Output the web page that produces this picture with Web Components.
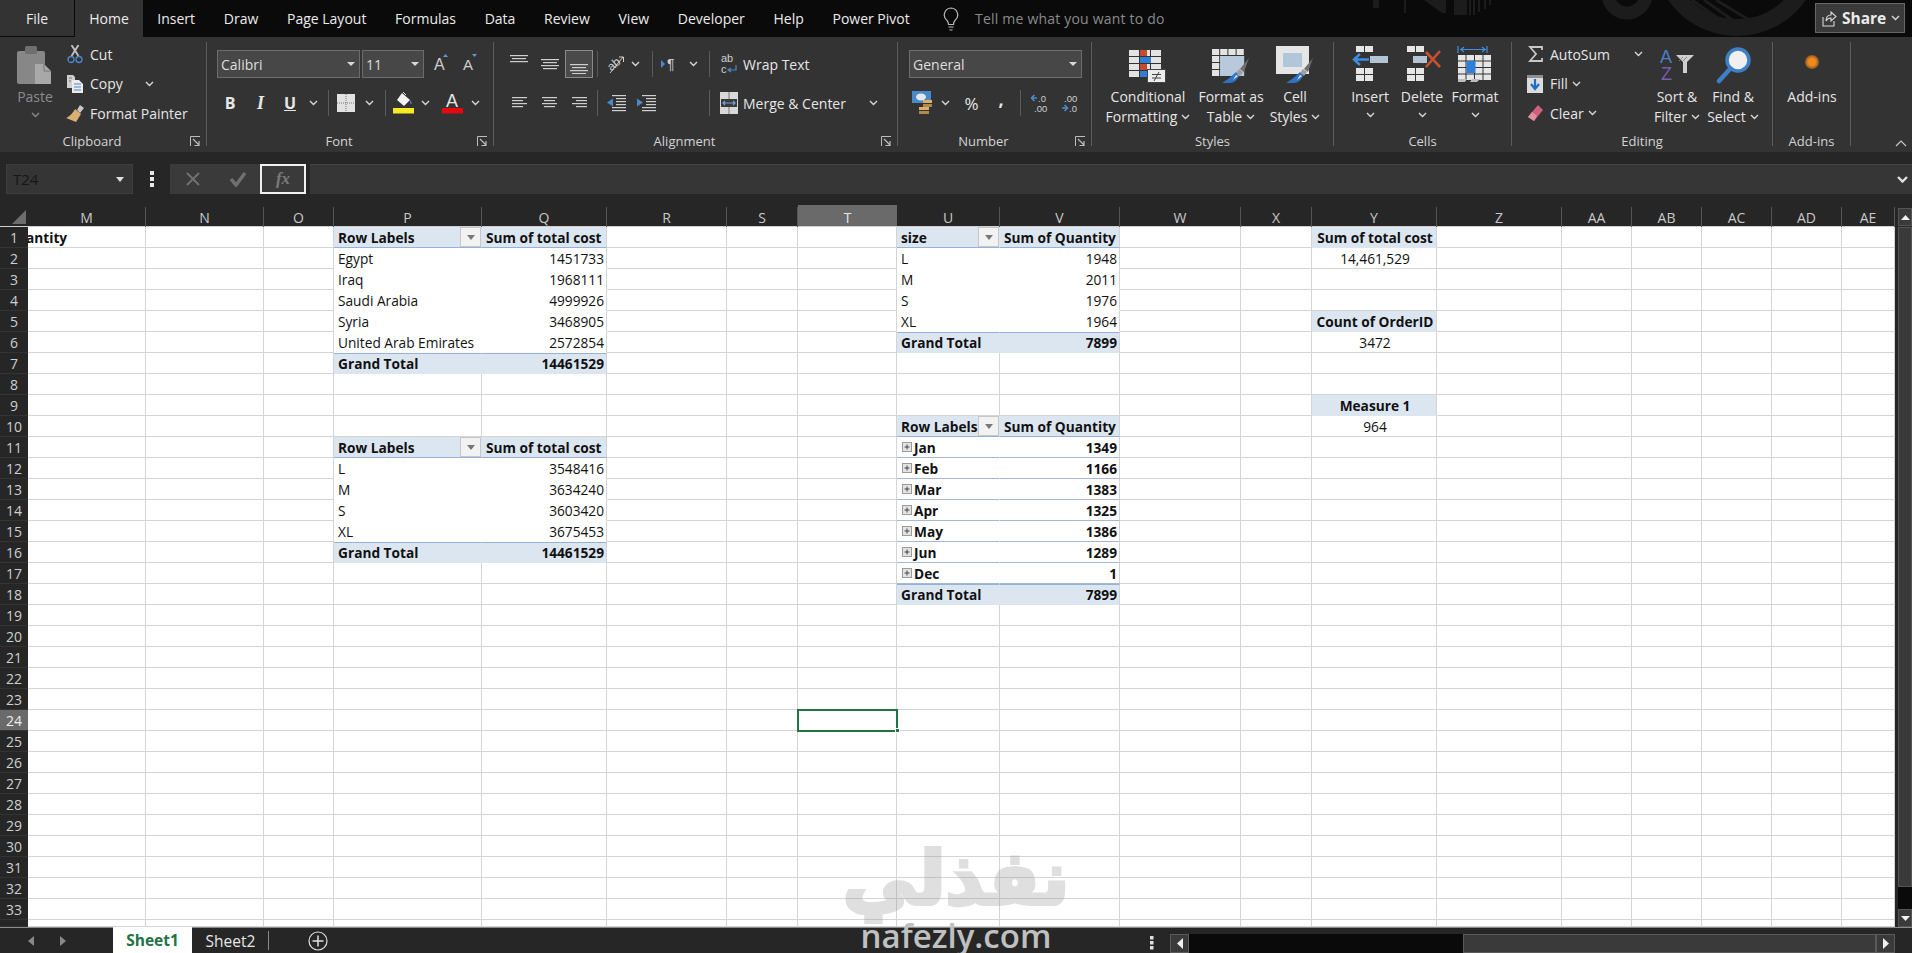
<!DOCTYPE html>
<html>
<head>
<meta charset="utf-8">
<title>Excel</title>
<style>
  html, body { margin: 0; background: #262626; }
  body { font: 14px "Open Sans", sans-serif; color: #e0e0e0; overflow: hidden; }
</style>
</head>
<body>
<xl-app>
  <xl-titlebar></xl-titlebar>
  <xl-ribbon>
    <xl-group w="207" label="Clipboard" launcher>
      <xl-row h="89" top>
        <xl-tool w="4"></xl-tool>
        <xl-big w="62" icon="paste" l1="Paste" chev dim></xl-big>
        <xl-stack>
          <xl-row h="24"><xl-tool w="18"><xl-icon name="cut"></xl-icon></xl-tool><xl-tool w="6"></xl-tool><span>Cut</span></xl-row>
          <xl-row h="24"><xl-tool w="18"><xl-icon name="copy"></xl-icon></xl-tool><xl-tool w="6"></xl-tool><span>Copy</span><xl-tool w="22"></xl-tool><xl-icon name="chev"></xl-icon></xl-row>
          <xl-row h="24"><xl-tool w="18"><xl-icon name="brush"></xl-icon></xl-tool><xl-tool w="6"></xl-tool><span>Format Painter</span></xl-row>
        </xl-stack>
      </xl-row>
    </xl-group>

    <xl-group w="287" label="Font" launcher>
      <xl-rows>
        <xl-row h="28">
          <xl-tool w="10"></xl-tool>
          <xl-combo w="143">Calibri</xl-combo>
          <xl-tool w="2"></xl-tool>
          <xl-combo w="62">11</xl-combo>
          <xl-tool w="34"><xl-icon name="grow"></xl-icon></xl-tool>
          <xl-tool w="24"><xl-icon name="shrink"></xl-icon></xl-tool>
        </xl-row>
        <xl-row h="28">
          <xl-tool w="8"></xl-tool>
          <xl-tool w="30"><b style="font-size:16px">B</b></xl-tool>
          <xl-tool w="31"><i style="font-family:'Liberation Serif',serif;font-size:18px;font-weight:700">I</i></xl-tool>
          <xl-tool w="28"><b style="font-size:16px;text-decoration:underline">U</b></xl-tool>
          <xl-tool w="18"><xl-icon name="chev"></xl-icon></xl-tool>
          <xl-tool w="6"></xl-tool><xl-sep></xl-sep>
          <xl-tool w="34"><xl-icon name="borders"></xl-icon></xl-tool>
          <xl-tool w="12"><xl-icon name="chev"></xl-icon></xl-tool>
          <xl-tool w="10"></xl-tool><xl-sep></xl-sep>
          <xl-tool w="34"><xl-icon name="fill"></xl-icon></xl-tool>
          <xl-tool w="10"><xl-icon name="chev"></xl-icon></xl-tool>
          <xl-tool w="4"></xl-tool>
          <xl-tool w="36"><xl-icon name="fontcolor"></xl-icon></xl-tool>
          <xl-tool w="10"><xl-icon name="chev"></xl-icon></xl-tool>
        </xl-row>
      </xl-rows>
    </xl-group>

    <xl-group w="404" label="Alignment" launcher>
      <xl-rows>
        <xl-row h="28">
          <xl-tool w="10"></xl-tool>
          <xl-tool w="30"><xl-icon name="atop"></xl-icon></xl-tool>
          <xl-tool w="31"><xl-icon name="amid"></xl-icon></xl-tool>
          <xl-tool w="28" on><xl-icon name="abot"></xl-icon></xl-tool>
          <xl-tool w="4"></xl-tool><xl-sep></xl-sep>
          <xl-tool w="33"><xl-icon name="orient"></xl-icon></xl-tool>
          <xl-tool w="8"><xl-icon name="chev"></xl-icon></xl-tool>
          <xl-tool w="13"></xl-tool><xl-sep></xl-sep>
          <xl-tool w="34"><xl-icon name="para"></xl-icon></xl-tool>
          <xl-tool w="12"><xl-icon name="chev"></xl-icon></xl-tool>
          <xl-tool w="10"></xl-tool><xl-sep></xl-sep>
          <xl-tool w="11"></xl-tool>
          <xl-tool w="16"><xl-icon name="wrap"></xl-icon></xl-tool>
          <xl-tool w="6"></xl-tool><span>Wrap Text</span>
        </xl-row>
        <xl-row h="28">
          <xl-tool w="10"></xl-tool>
          <xl-tool w="30"><xl-icon name="aleft"></xl-icon></xl-tool>
          <xl-tool w="30"><xl-icon name="acen"></xl-icon></xl-tool>
          <xl-tool w="30"><xl-icon name="aright"></xl-icon></xl-tool>
          <xl-tool w="3"></xl-tool><xl-sep></xl-sep>
          <xl-tool w="36"><xl-icon name="indentl"></xl-icon></xl-tool>
          <xl-tool w="24"><xl-icon name="indentr"></xl-icon></xl-tool>
          <xl-tool w="51"></xl-tool><xl-sep></xl-sep>
          <xl-tool w="10"></xl-tool>
          <xl-tool w="18"><xl-icon name="merge"></xl-icon></xl-tool>
          <xl-tool w="5"></xl-tool>
          <xl-tool w="118" left>Merge &amp; Center</xl-tool>
          <xl-tool w="24"><xl-icon name="chev"></xl-icon></xl-tool>
        </xl-row>
      </xl-rows>
    </xl-group>

    <xl-group w="194" label="Number" launcher>
      <xl-rows>
        <xl-row h="28"><xl-tool w="11"></xl-tool><xl-combo w="173">General</xl-combo></xl-row>
        <xl-row h="28">
          <xl-tool w="14"></xl-tool>
          <xl-tool w="20"><xl-icon name="money"></xl-icon></xl-tool>
          <xl-tool w="26"><xl-icon name="chev"></xl-icon></xl-tool>
          <xl-tool w="27"><span style="font-size:17px">%</span></xl-tool>
          <xl-tool w="32"><b style="font-size:18px;line-height:18px;margin-bottom:8px">,</b></xl-tool>
          <xl-tool w="3"></xl-tool><xl-sep></xl-sep>
          <xl-tool w="37"><xl-icon name="decl"></xl-icon></xl-tool>
          <xl-tool w="24"><xl-icon name="decr"></xl-icon></xl-tool>
        </xl-row>
      </xl-rows>
    </xl-group>

    <xl-group w="242" label="Styles">
      <xl-row h="89" top>
        <xl-big w="112" icon="cf" l1="Conditional" l2="Formatting" chev></xl-big>
        <xl-big w="54" icon="ft" l1="Format as" l2="Table" chev></xl-big>
        <xl-big w="74" icon="cs" l1="Cell" l2="Styles" chev></xl-big>
      </xl-row>
    </xl-group>

    <xl-group w="178" label="Cells">
      <xl-row h="89" top>
        <xl-big w="72" icon="ins" l1="Insert" chev></xl-big>
        <xl-big w="32" icon="del" l1="Delete" chev></xl-big>
        <xl-big w="74" icon="fmt" l1="Format" chev></xl-big>
      </xl-row>
    </xl-group>

    <xl-group w="261" label="Editing">
      <xl-row h="89" top>
        <xl-tool w="4"></xl-tool>
        <xl-stack style="width:131px">
          <xl-row h="24"><xl-tool w="11"></xl-tool><xl-tool w="16"><xl-icon name="sum"></xl-icon></xl-tool><xl-tool w="7"></xl-tool><xl-tool w="84" left>AutoSum</xl-tool><xl-icon name="chev"></xl-icon></xl-row>
          <xl-row h="24"><xl-tool w="11"></xl-tool><xl-tool w="16"><xl-icon name="filldown"></xl-icon></xl-tool><xl-tool w="7"></xl-tool><span>Fill</span><xl-tool w="4"></xl-tool><xl-icon name="chev"></xl-icon></xl-row>
          <xl-row h="24"><xl-tool w="11"></xl-tool><xl-tool w="16"><xl-icon name="clear"></xl-icon></xl-tool><xl-tool w="7"></xl-tool><span>Clear</span><xl-tool w="4"></xl-tool><xl-icon name="chev"></xl-icon></xl-row>
        </xl-stack>
        <xl-big w="60" icon="sort" l1="Sort &amp;" l2="Filter" chev></xl-big>
        <xl-big w="52" icon="find" l1="Find &amp;" l2="Select" chev></xl-big>
      </xl-row>
    </xl-group>

    <xl-group w="78" label="Add-ins">
      <xl-row h="89" top><xl-big w="78" icon="addin" l1="Add-ins"></xl-big></xl-row>
    </xl-group>

    <xl-collapse></xl-collapse>
  </xl-ribbon>
  <xl-formula></xl-formula>
  <xl-sheet></xl-sheet>
  <xl-tabs></xl-tabs>
  <xl-watermark></xl-watermark>
</xl-app>

<script>
  const svg = (w, h, body) => `<svg width="${w}" height="${h}" viewBox="0 0 ${w} ${h}" xmlns="http://www.w3.org/2000/svg">${body}</svg>`;
  const bars = list => list.map(([x, y, l]) => `<rect x="${x}" y="${y}" width="${l}" height="1.2" fill="#cfcfcf"/>`).join('');
  // table of small cells used by the big ribbon icons
  const cells = (x, y, cols, rows, cw, ch, fill) => {
    let out = '';
    for (let r = 0; r < rows; r++) {
      for (let c = 0; c < cols; c++) {
        out += `<rect x="${x + c * cw}" y="${y + r * ch}" width="${cw - 1}" height="${ch - 1}" fill="${fill}"/>`;
      }
    }
    return out;
  };
  const paintbrush = '<path d="M37 12l-5 14-4-3z" fill="#6e6e6e"/><path d="M31 26l-3 4-4-3 3-4z" fill="#a0a0a0"/><path d="M27 30c-2 4-5 7-9 7H10c5-3 10-7 14-11z" fill="#2f73c4"/><path d="M24 29l2 1-5 4z" fill="#dfe8f2"/>';
  const letter = 'font-family="Liberation Sans"';

  const ICONS = {
    chev: svg(9, 6, '<path d="M1 1l3.5 3.5L8 1" fill="none" stroke="#d8d8d8" stroke-width="1.4"/>'),
    dimchev: svg(9, 6, '<path d="M1 1l3.5 3.5L8 1" fill="none" stroke="#8a8a8a" stroke-width="1.4"/>'),
    launcher: svg(11, 11, '<path d="M.5 10V.5H10" fill="none" stroke="#bdbdbd"/><path d="M3 3l6 6M9 5v4.5H4.5" fill="none" stroke="#bdbdbd" stroke-width="1.2"/>'),
    paste: svg(36, 38, '<rect x="0" y="5" width="28" height="33" rx="2" fill="#878787"/><rect x="8" y="0" width="12" height="8" rx="1.5" fill="#6f6f6f"/><path d="M18 18h9l7 7v13H18z" fill="#a8a8a8"/><path d="M27 18v7h7" fill="none" stroke="#777"/>'),
    cut: svg(16, 19, '<path d="M4.500 0l7 11M11.500 0l-7 11" stroke="#c4c4c4" stroke-width="1.800"/><circle cx="4" cy="14.500" r="3" fill="none" stroke="#4a8ac8" stroke-width="1.300"/><circle cx="12" cy="14.500" r="3" fill="none" stroke="#4a8ac8" stroke-width="1.300"/>'),
    copy: svg(16, 18, '<path d="M0 0h6l2 2v11H0z" fill="#d0d0d0"/><path d="M5 5h7l4 4v9H5z" fill="#ececec"/><path d="M7 9h7M7 12h7M7 15h7" stroke="#4a8ac8"/><path d="M2 3h3M2 6h2" stroke="#777"/>'),
    brush: svg(18, 17, '<path d="M14 0l4 3-4 5-3-3z" fill="#c8c8c8"/><path d="M9 4l6 5-5 8-10-4c3-1 7-5 9-9z" fill="#d9b070"/>'),
    grow: svg(17, 22, `<text x="1" y="17" ${letter} font-size="16" fill="#cfcfcf">A</text><path d="M10 4l2.500-3 2.500 3z" fill="#5b9bd5"/>`),
    shrink: svg(17, 22, `<text x="1" y="17" ${letter} font-size="15" fill="#cfcfcf">A</text><path d="M10 1l2.500 3L15 1z" fill="#5b9bd5"/>`),
    borders: svg(18, 18, '<rect width="18" height="18" fill="#e2e2e2"/><path d="M9 0v18M0 9h18" stroke="#777" stroke-dasharray="1 1"/>'),
    fill: svg(21, 26, '<path d="M9 3l8 7-6 6-7-6z" fill="#f2f2f2"/><path d="M10 2l3 3" stroke="#ddd"/><path d="M17 10c2 2 2 4 1 4s-1-2-1-4z" fill="#4a8ac8"/><rect y="18" width="21" height="5.500" fill="#f6e926"/>'),
    fontcolor: svg(21, 26, `<text x="4" y="17" ${letter} font-size="18" fill="#e6e6e6">A</text><rect y="18" width="21" height="5.500" fill="#e3090f"/>`),
    atop: svg(18, 20, bars([[0, 1, 18], [2, 4, 14], [0, 7, 18]])),
    amid: svg(18, 20, bars([[0, 5, 18], [2, 8, 14], [0, 11, 18], [2, 14, 14]])),
    abot: svg(18, 20, bars([[0, 10, 18], [2, 13, 14], [0, 16, 18], [2, 19, 14]])),
    aleft: svg(15, 20, bars([[0, 4, 15], [0, 7, 11], [0, 10, 15], [0, 13, 11]])),
    acen: svg(15, 20, bars([[0, 4, 15], [2, 7, 11], [0, 10, 15], [2, 13, 11]])),
    aright: svg(15, 20, bars([[0, 4, 15], [4, 7, 11], [0, 10, 15], [4, 13, 11]])),
    orient: svg(26, 28, `<text x="5" y="18" ${letter} font-size="12" fill="#cfcfcf" transform="rotate(-40 12 14)">ab</text><path d="M8 23L21 7" stroke="#cfcfcf"/><path d="M17 7h4.500v5" fill="none" stroke="#cfcfcf"/>`),
    para: svg(18, 20, `<path d="M0 6l4 4-4 4z" fill="#4a8ac8"/><text x="6" y="15" ${letter} font-size="14" fill="#cfcfcf">¶</text>`),
    wrap: svg(16, 28, `<text x="0" y="12" ${letter} font-size="11" fill="#cfcfcf">ab</text><text x="0" y="23" ${letter} font-size="11" fill="#cfcfcf">c</text><path d="M15 15v5H8M10 18l-3 2 3 2" fill="none" stroke="#4a8ac8" stroke-width="1.2"/>`),
    indentl: svg(19, 20, bars([[5, 2, 14], [9, 5, 10], [9, 8, 10], [9, 11, 10], [5, 14, 14], [5, 17, 14]]) + '<path d="M0 9.5l6-4v8z" fill="#4a8ac8"/>'),
    indentr: svg(19, 20, bars([[5, 2, 14], [9, 5, 10], [9, 8, 10], [9, 11, 10], [5, 14, 14], [5, 17, 14]]) + '<path d="M6 9.5l-6-4v8z" fill="#4a8ac8"/>'),
    merge: svg(18, 22, '<rect width="18" height="22" fill="#d8d8d8"/><rect x="1" y="7" width="16" height="8" fill="#3a3a3a"/><path d="M9 0v7M9 15v7" stroke="#777"/><path d="M3 11h12M5 9l-2 2 2 2M13 9l2 2-2 2" fill="none" stroke="#6aa5e0" stroke-width="1.2"/>'),
    money: svg(20, 24, '<rect width="19" height="12" fill="#4a8ac8"/><ellipse cx="9" cy="6" rx="5" ry="3.5" fill="#e8e8e8"/><rect x="11" y="9" width="9" height="3" fill="#d9b070"/><rect x="11" y="13" width="9" height="3" fill="#b08a4a"/><rect x="7" y="16" width="10" height="3" fill="#d9b070"/><rect x="7" y="20" width="10" height="3" fill="#b08a4a"/>'),
    decl: svg(18, 24, `<path d="M6 7H1M3.500 4L.5 7l3 3" fill="none" stroke="#4a8ac8" stroke-width="1.600"/><text x="7" y="11" ${letter} font-size="9.500" fill="#cfcfcf">.0</text><text x="3" y="21" ${letter} font-size="9.500" fill="#cfcfcf">.00</text>`),
    decr: svg(18, 24, `<text x="3" y="11" ${letter} font-size="9.500" fill="#cfcfcf">.00</text><path d="M1 17h5M3.500 14l3 3-3 3" fill="none" stroke="#4a8ac8" stroke-width="1.600"/><text x="8" y="21" ${letter} font-size="9.500" fill="#cfcfcf">.0</text>`),
    cf: svg(38, 38, '<g transform="translate(0 4)">' + cells(0, 0, 3, 4, 11, 7, '#e3e3e3') + '<rect x="11" y="0" width="7" height="6" fill="#c8492c"/><rect x="11" y="7" width="11" height="6" fill="#2f7ed8"/><rect x="11" y="14" width="7" height="6" fill="#c8492c"/><rect x="11" y="21" width="7" height="6" fill="#2f7ed8"/><rect x="18.500" y="19.500" width="18" height="13" fill="#ececec" stroke="#444"/><path d="M23 24.500h9M23 28h9M30 22l-5 9" stroke="#444"/></g>'),
    ft: svg(38, 38, '<g transform="translate(0 3)">' + cells(0, 0, 4, 4, 8.200, 7, '#e3e3e3') + '<rect x="8.200" y="7" width="24" height="20" fill="#b7c9da"/></g>' + paintbrush),
    cs: svg(38, 38, '<rect width="33" height="28" fill="#e6e6e6"/><rect x="7" y="7" width="19" height="14" fill="#b2c6da"/>' + paintbrush),
    ins: svg(36, 36, cells(4, 0, 2, 1, 9, 7, '#e6e6e6') + '<path d="M17 13.500H3M8 8l-6 5.500 6 5.500" fill="none" stroke="#3f8fe0" stroke-width="2.400"/><rect x="18" y="10" width="18" height="7" fill="#b4c4d4"/>' + cells(4, 22, 2, 2, 9, 7, '#e6e6e6')),
    del: svg(38, 36, '<g transform="translate(4 0)">' + cells(0, 0, 2, 1, 9, 7, '#e6e6e6') + '<rect x="6" y="10" width="14" height="7" fill="#b4c4d4"/><path d="M20 13.500l-4-3v7z" fill="#b4c4d4"/>' + cells(0, 22, 2, 2, 9, 7, '#e6e6e6') + '<path d="M19 6l14 15M33 5L19 21" stroke="#c8502e" stroke-width="2.600"/></g>'),
    fmt: svg(36, 38, '<path d="M1 0v7M30 0v7M3 3.500h26M7 1l-3 2.500L7 6M25 1l3 2.500L25 6" fill="none" stroke="#3f8fe0" stroke-width="1.200"/>' + cells(1, 9, 4, 4, 8.500, 6.500, '#e6e6e6') + '<rect x="9.500" y="15" width="9" height="12" fill="#2f7ed8"/><path d="M1 36v-3h9l-2 3zM13 36l2-3h8l-3 3z" fill="#bcbcbc"/>'),
    sum: svg(15, 16, '<path d="M14 4V1H2l6 7-6 7h12v-3" fill="none" stroke="#c8c8c8" stroke-width="1.800"/>'),
    filldown: svg(16, 18, '<rect width="16" height="18" fill="#dcdcdc"/><rect y="0" width="16" height="3" fill="#8f8f8f"/><path d="M8 4v10M4 9l4 5 4-5" fill="none" stroke="#1f6fc4" stroke-width="2.200"/>'),
    clear: svg(16, 16, '<path d="M11 0l5 5-9 11-6-4z" fill="#d0607e"/><path d="M1 12l4-5 5 4-3 5z" fill="#e08fa6"/>'),
    sort: svg(36, 38, `<text x="1" y="17" ${letter} font-size="18" fill="#4a7fc4">A</text><text x="2" y="34" ${letter} font-size="18" fill="#7a5bb0">Z</text><path d="M17 9h18l-7 7v11h-4V16z" fill="#cfcfcf"/><path d="M24 11l-4 4M28 11l-4 4" stroke="#888"/>`),
    find: svg(36, 38, '<circle cx="23" cy="14" r="11" fill="#f0f0f0" stroke="#3f7fc8" stroke-width="3.500"/><path d="M15 23L4 35" stroke="#3f7fc8" stroke-width="4.500" stroke-linecap="round"/>'),
    addin: svg(16, 32, '<defs><radialGradient id="o"><stop offset=".5" stop-color="#f08a1c"/><stop offset="1" stop-color="#8a5a20"/></radialGradient></defs><circle cx="8" cy="16" r="7" fill="url(#o)"/>'),
    bulb: svg(16, 24, '<path d="M8 1a7 7 0 0 0-4 12.500c1 1 1.500 2 1.500 4h5c0-2 .5-3 1.500-4A7 7 0 0 0 8 1z" fill="none" stroke="#bbb" stroke-width="1.200"/><path d="M5.500 20h5M6.500 23h3" stroke="#bbb" stroke-width="1.200"/>'),
    share: svg(15, 18, '<path d="M1 8v9h11V12M4 12c0-4 2-6 5-6V3l5 4.500L9 12V9c-2 0-4 1-5 3z" fill="none" stroke="#d6d6d6" stroke-width="1.100"/>')
  };

  // plain element: shadow root from a css and html string
  const el = (name, css, html, setup) => {
    customElements.define(name, class extends HTMLElement {
      constructor() {
        super();
        this.attachShadow({mode: 'open'});
        this.shadowRoot.innerHTML = `<style>${css}</style>${html}`;
      }
      connectedCallback() {
        if (setup) setup(this, this.shadowRoot);
      }
    });
  };

  el('xl-app', ':host{position:relative;width:1912px;height:953px;overflow:hidden;display:flex;flex-direction:column}', '<slot></slot>');

  el('xl-icon', ':host{display:inline-flex;align-items:center;justify-content:center;flex:none}svg{display:block}', '', (host, root) => {
    root.innerHTML += ICONS[host.getAttribute('name')] || '';
  });

  el('xl-tool', ':host{display:flex;align-items:center;justify-content:center;flex:none;height:100%;box-sizing:border-box;white-space:nowrap}:host([left]){justify-content:flex-start}:host([on]){background:#4a4a4a;border:1px solid #8a8a8a}', '<slot></slot>', host => {
    host.style.width = host.getAttribute('w') + 'px';
  });

  el('xl-sep', ':host{display:block;flex:none;width:1px;height:26px;margin:1px 0;background:#5a5a5a}', '');

  el('xl-row', ':host{display:flex;align-items:center;flex:none;white-space:nowrap}:host([top]){align-items:flex-start}', '<slot></slot>', host => {
    host.style.height = host.getAttribute('h') + 'px';
  });

  el('xl-rows', ':host{display:flex;flex-direction:column;gap:11px;padding-top:8px}', '<slot></slot>');
  el('xl-stack', ':host{display:flex;flex-direction:column;gap:5.5px;flex:none}', '<slot></slot>');

  el('xl-combo', ':host{display:flex;align-items:center;flex:none;box-sizing:border-box;height:28px;padding:0 3px;background:#474747;border:1px solid #6c6c6c;color:#dedede}span{flex:1}i{width:0;height:0;margin-right:1px;border:4px solid transparent;border-top:4px solid #d8d8d8;border-bottom:0}', '<span><slot></slot></span><i></i>', host => {
    host.style.width = host.getAttribute('w') + 'px';
  });

  el('xl-big', `:host{display:flex;flex-direction:column;align-items:center;flex:none;white-space:nowrap;color:#e6e6e6}
    .ic{height:43px;padding-top:4px;box-sizing:border-box;display:flex;align-items:flex-start;justify-content:center}
    .l{height:20px;line-height:20px;display:flex;align-items:center;gap:4px;justify-content:center;margin-top:2px}
    :host([dim]){color:#8b8b8b}`, '', (host, root) => {
    host.style.width = host.getAttribute('w') + 'px';
    const l2 = host.getAttribute('l2');
    const chev = host.hasAttribute('chev');
    const mark = host.hasAttribute('dim') ? 'dimchev' : 'chev';
    let html = `<div class="ic"><xl-icon name="${host.getAttribute('icon')}"></xl-icon></div><div class="l">${host.getAttribute('l1')}</div>`;
    if (l2) html += `<div class="l" style="margin-top:0">${l2}${chev ? `<xl-icon name="${mark}"></xl-icon>` : ''}</div>`;
    else if (chev) html += `<div class="l" style="margin-top:-2px"><xl-icon name="${mark}"></xl-icon></div>`;
    root.innerHTML += html;
  });

  el('xl-group', `:host{display:block;flex:none;height:115px;box-sizing:border-box;padding-top:5px}
    .box{height:104px;box-sizing:border-box;border-right:1px solid #5a5a5a;display:flex;flex-direction:column}
    .body{height:89px;flex:none}
    .foot{display:flex;align-items:center;height:20px;flex:none;font-size:13px;color:#d4d4d4}
    .name{flex:1;text-align:center}
    .lau{width:22px;display:flex;justify-content:center;flex:none}`,
    '<div class="box"><div class="body"><slot></slot></div><div class="foot"><div class="name"></div></div></div>', (host, root) => {
      host.style.width = host.getAttribute('w') + 'px';
      root.querySelector('.name').textContent = host.getAttribute('label');
      if (host.hasAttribute('launcher')) {
        root.querySelector('.foot').insertAdjacentHTML('beforeend', '<div class="lau"><xl-icon name="launcher"></xl-icon></div>');
      }
    });

  el('xl-ribbon', ':host{display:flex;flex:none;height:115px;background:#333;font-size:14px;color:#e6e6e6}', '<slot></slot>');
  el('xl-collapse', ':host{flex:1;display:flex;justify-content:flex-end;align-items:flex-end;padding:0 5px 5px 0}', svg(12, 8, '<path d="M1 7l5-5 5 5" fill="none" stroke="#c8c8c8" stroke-width="1.200"/>'));

  el('xl-titlebar', `:host{display:flex;flex:none;position:relative;height:37px;background:#0a0a0a;font-size:14px;color:#ececec}
    .deco{position:absolute;left:1340px;top:0}
    .tab{display:flex;align-items:center;padding:0 14.35px;position:relative;white-space:nowrap}
    .file{width:75px;box-sizing:border-box;justify-content:center;background:#333;border-right:1px solid #0a0a0a;border-bottom:1px solid #0a0a0a}
    .home{width:68px;box-sizing:border-box;justify-content:center;background:#333}
    .tell{display:flex;align-items:center;gap:16px;margin-left:19px;color:#8a8a8a;position:relative;letter-spacing:.2px}
    .share{position:absolute;left:1815px;top:3px;width:90px;height:30px;box-sizing:border-box;display:flex;align-items:center;gap:5px;padding-left:6px;background:#3a3a3a;border:1px solid #666;font-weight:700;font-size:15.500px}`,
    `<svg class="deco" width="572" height="37" viewBox="0 0 572 37">
      <g fill="none" stroke="#1c1c1c">
        <circle cx="397" cy="-48" r="75.500" stroke-width="17"/>
        <circle cx="287" cy="-6" r="19" stroke-width="13"/>
        <path d="M340 0l40 28M352 0l40 28M364 0l40 28M376 0l40 24" stroke-width="3"/>
        <path d="M65 0v13M122 0v15M126 0v15M130 0v15M134 0v15M139 0v12M145 0v9M150 0v5" stroke-width="2"/>
      </g>
      <path d="M33 0h6v8h-6zM84 0l18 13h4V0zM114 0h12v15h-12z" fill="#1c1c1c"/>
    </svg>
    <div class="tab file">File</div><div class="tab home">Home</div>
    <div class="tab">Insert</div><div class="tab">Draw</div><div class="tab">Page Layout</div>
    <div class="tab">Formulas</div><div class="tab">Data</div><div class="tab">Review</div>
    <div class="tab">View</div><div class="tab">Developer</div><div class="tab">Help</div><div class="tab">Power Pivot</div>
    <div class="tell"><xl-icon name="bulb"></xl-icon><span>Tell me what you want to do</span></div>
    <div class="share"><xl-icon name="share"></xl-icon><span>Share</span><xl-icon name="chev"></xl-icon></div>`);

  el('xl-formula', `:host{display:flex;flex:none;align-items:flex-start;height:53px;box-sizing:border-box;padding:12px 0 0 6px;background:#262626}
    .name{width:127px;height:30px;box-sizing:border-box;display:flex;align-items:center;justify-content:space-between;padding:0 8px 0 6px;background:#353535;border:1px solid #3e3e3e;color:#161616;font-size:15px}
    .name i{width:0;height:0;border:4.500px solid transparent;border-top:5px solid #e0e0e0;border-bottom:0}
    .dots{width:37px;height:30px;display:flex;align-items:center;justify-content:center;flex:none}
    .btns{display:flex;width:136px;height:30px;background:#3a3a3a;flex:none}
    .btn{width:45px;display:flex;align-items:center;justify-content:center}
    .fx{width:46px;box-sizing:border-box;border:2px solid #f0f0f0;color:#7a7a7a;font:italic 700 17px "Liberation Serif",serif;display:flex;align-items:center;justify-content:center}
    .input{flex:1;margin-left:4px;height:30px;background:#363636;border-top:1px solid #434343;display:flex;align-items:center;justify-content:flex-end;padding-right:4px;box-sizing:border-box}`,
    `<div class="name"><span>T24</span><i></i></div>
    <div class="dots">${svg(4, 16, '<rect y="0" width="4" height="4" fill="#e8e8e8"/><rect y="6" width="4" height="4" fill="#e8e8e8"/><rect y="12" width="4" height="4" fill="#e8e8e8"/>')}</div>
    <div class="btns">
      <div class="btn">${svg(16, 16, '<path d="M2 2l12 12M14 2L2 14" stroke="#707070" stroke-width="2"/>')}</div>
      <div class="btn">${svg(18, 16, '<path d="M2 8l5 6L16 2" fill="none" stroke="#707070" stroke-width="3.500"/>')}</div>
      <div class="fx">fx</div>
    </div>
    <div class="input">${svg(11, 8, '<path d="M1 1l4.500 4.500L10 1" fill="none" stroke="#e0e0e0" stroke-width="2.400"/>')}</div>`);

  const COLS = [['M', 118], ['N', 118], ['O', 70], ['P', 148], ['Q', 125], ['R', 120], ['S', 71], ['T', 99], ['U', 103], ['V', 120], ['W', 121], ['X', 71], ['Y', 125], ['Z', 125], ['AA', 70], ['AB', 70], ['AC', 70], ['AD', 70], ['AE', 53]];

  // cell map: key -> [text, classes]
  const DATA = {M1: ['antity', 'b cl']};
  const pivot = (c1, c2, top, head, rows, total, mark) => {
    DATA[c1 + top] = [head[0], 'h b flt'];
    DATA[c2 + top] = [head[1], 'h b e'];
    rows.forEach((r, i) => {
      const n = top + 1 + i;
      DATA[c1 + n] = [r[0], 'p' + (mark ? ' b m x' : '')];
      DATA[c2 + n] = [r[1], 'r e' + (mark ? ' b m' : ' q')];
    });
    const n = top + rows.length + 1;
    DATA[c1 + n] = ['Grand Total', 't b'];
    DATA[c2 + n] = [total, 't b r e'];
  };
  pivot('P', 'Q', 1, ['Row Labels', 'Sum of total cost'], [['Egypt', 1451733], ['Iraq', 1968111], ['Saudi Arabia', 4999926], ['Syria', 3468905], ['United Arab Emirates', 2572854]], 14461529);
  pivot('P', 'Q', 11, ['Row Labels', 'Sum of total cost'], [['L', 3548416], ['M', 3634240], ['S', 3603420], ['XL', 3675453]], 14461529);
  pivot('U', 'V', 1, ['size', 'Sum of Quantity'], [['L', 1948], ['M', 2011], ['S', 1976], ['XL', 1964]], 7899);
  pivot('U', 'V', 10, ['Row Labels', 'Sum of Quantity'], [['Jan', 1349], ['Feb', 1166], ['Mar', 1383], ['Apr', 1325], ['May', 1386], ['Jun', 1289], ['Dec', 1]], 7899, true);
  Object.assign(DATA, {
    Y1: ['Sum of total cost', 'h b c'], Y2: ['14,461,529', 'c'],
    Y5: ['Count of OrderID', 'h b c'], Y6: ['3472', 'c'],
    Y9: ['Measure 1', 'h b c'], Y10: ['964', 'c']
  });

  el('xl-sheet', `:host{display:flex;flex:none;height:722px;background:#262626}
    .main{width:1895px;flex:none;display:grid;grid-template-columns:28px ${COLS.map(c => c[1] + 'px').join(' ')};grid-template-rows:22px repeat(33,21px) 7px;overflow:hidden;font-size:13.700px;color:#111}
    .hc{position:relative;display:flex;align-items:center;justify-content:center;box-sizing:border-box;color:#c8c8c8;font-size:14px;border-right:1px solid #555;margin-top:2px;height:20px;padding-top:1px}
    .corner{background:#262626;display:flex;align-items:flex-end;justify-content:flex-end;padding:0 2px 2px 0;box-sizing:border-box;border-bottom:1px solid #cfcfcf}
    .hw{background:#262626;box-sizing:border-box;border-bottom:1px solid #cfcfcf}
    .sel{background:#6a6a6a;color:#e6e6e6;margin-top:0;height:21px;border-bottom:0;padding-top:3px}
    .selw{box-shadow:inset 0 -2px 0 #217346;background:#6a6a6a}
    .rh{display:flex;align-items:center;justify-content:center;color:#cfcfcf;background:#262626;font-size:14px;box-sizing:border-box;border-bottom:1px solid #333;padding-top:1px}
    .rh.on{background:#6a6a6a;color:#eee}
    .k{background:#fff;box-sizing:border-box;border-right:1px solid #d4d4d4;border-bottom:1px solid #d4d4d4;line-height:22px;padding:0 2px 0 4px;white-space:nowrap;position:relative;min-width:0}
    .b{font-weight:700}.r{text-align:right}.c{text-align:center}
    .cl{overflow:hidden;padding:0;text-indent:-2px}
    .h{background:#dce6f1;border-right-color:#dce6f1;border-bottom-color:#95b3d7}
    .h.e{border-right-color:#d4d4d4}.h.c{border-bottom-color:#dce6f1;border-right-color:#d4d4d4}
    .t{background:#dce6f1;border-right-color:#dce6f1;border-bottom-color:#dce6f1;border-top:1px solid #95b3d7;line-height:20px}
    .t.e{border-right-color:#d4d4d4}
    .p{border-right-color:#fff;border-bottom-color:#fff}.q{border-bottom-color:#fff}
    .m{border-bottom-color:#a5b9d7}.x{padding-left:17px}
    .pm{position:absolute;left:5px;top:5px;width:10px;height:10px;display:block}
    .fb{position:absolute;right:0;top:0;width:21px;height:20px;box-sizing:border-box;background:#f2f2f2;border:1px solid #c8c8c8;display:flex;align-items:center;justify-content:center}
    .fb i{width:0;height:0;border:4px solid transparent;border-top:5px solid #777;border-bottom:0}
    .cur{outline:2px solid #217346;outline-offset:-1px;z-index:2}
    .cur::after{content:"";position:absolute;right:-4px;bottom:-3px;width:5px;height:5px;background:#217346;border:1px solid #fff;box-sizing:border-box}
    .vs{flex:1;display:flex;flex-direction:column;padding:3px 0 0 3px;box-sizing:border-box;background:#262626}
    .vb{height:18px;flex:none;display:flex;align-items:center;justify-content:center;background:#3a3a3a;border:1px solid #555;box-sizing:border-box}
    .vt{height:660px;flex:none;background:#3a3a3a;border:1px solid #555;box-sizing:border-box;margin-top:1px}
    .vk{flex:1;background:#0a0a0a}`,
    '<div class="main"></div><div class="vs"><div class="vb">' + svg(9, 5, '<path d="M0 5l4.500-5L9 5z" fill="#f0f0f0"/>') + '</div><div class="vt"></div><div class="vk"></div><div class="vb">' + svg(9, 5, '<path d="M0 0l4.500 5L9 0z" fill="#f0f0f0"/>') + '</div></div>',
    (host, root) => {
      let html = '<div class="corner">' + svg(14, 14, '<path d="M14 0v14H0z" fill="#6e6e6e"/>') + '</div>';
      COLS.forEach(([name]) => {
        if (name === 'T') html += `<div class="hw selw"><div class="hc sel" style="border:0">${name}</div></div>`;
        else html += `<div class="hw"><div class="hc">${name}</div></div>`;
      });
      for (let r = 1; r <= 34; r++) {
        html += `<div class="rh${r === 24 ? ' on' : ''}">${r === 34 ? '' : r}</div>`;
        COLS.forEach(([name]) => {
          const d = DATA[name + r];
          const cur = name === 'T' && r === 24 ? ' cur' : '';
          if (!d) {
            html += `<div class="k${cur}"></div>`;
            return;
          }
          const [text, cls] = d;
          let extra = '';
          if (cls.includes('flt')) extra = '<span class="fb"><i></i></span>';
          if (cls.includes(' x')) extra = '<svg class="pm" viewBox="0 0 10 10"><rect x=".5" y=".5" width="9" height="9" fill="#e4e4e4" stroke="#9a9a9a"/><path d="M2.500 5h5M5 2.500v5" stroke="#444"/></svg>';
          html += `<div class="k ${cls}">${extra}${text}</div>`;
        });
      }
      root.querySelector('.main').innerHTML = html;
    });

  el('xl-tabs', `:host{display:flex;flex:none;align-items:stretch;height:26px;box-sizing:border-box;background:#262626;border-top:1px solid #8a8a8a;color:#e6e6e6;font-size:15.500px;position:relative}
    .nav{width:113px;flex:none;display:flex;align-items:center;padding-left:28px;gap:26px;box-sizing:border-box}
    .tab{display:flex;align-items:center;justify-content:center;flex:none}
    .on{width:79px;background:#fff;color:#217346;font-weight:700;margin-top:-1px}
    .off{width:77px;position:relative}
    .off::after{content:"";position:absolute;right:0;top:3px;bottom:3px;width:1px;background:#8a8a8a}
    .plus{margin-left:39px;display:flex;align-items:center}
    .dots{margin-left:814px;width:19px;display:flex;align-items:center;justify-content:center;padding-top:5px}
    .sb{display:flex;flex:none;margin-left:9px;padding-top:6px;height:25px;box-sizing:border-box}
    .btn{width:19px;height:19px;display:flex;align-items:center;justify-content:center;background:#3a3a3a;border:1px solid #5a5a5a;box-sizing:border-box;flex:none}
    .track{width:274px;background:#0a0a0a;height:19px}
    .thumb{width:413px;background:#3a3a3a;border:1px solid #5a5a5a;box-sizing:border-box;height:19px}`,
    `<div class="nav">${svg(6, 10, '<path d="M6 0v10L0 5z" fill="#888"/>')}${svg(6, 10, '<path d="M0 0v10l6-5z" fill="#888"/>')}</div>
    <div class="tab on">Sheet1</div><div class="tab off">Sheet2</div>
    <div class="plus">${svg(20, 20, '<circle cx="10" cy="10" r="9" fill="none" stroke="#e0e0e0" stroke-width="1.200"/><path d="M10 4.500v11M4.500 10h11" stroke="#e0e0e0" stroke-width="1.500"/>')}</div>
    <div class="dots">${svg(4, 14, '<rect width="3.500" height="3.500" fill="#e0e0e0"/><rect y="5" width="3.500" height="3.500" fill="#e0e0e0"/><rect y="10" width="3.500" height="3.500" fill="#e0e0e0"/>')}</div>
    <div class="sb"><div class="btn">${svg(6, 11, '<path d="M6 0v11L0 5.500z" fill="#f0f0f0"/>')}</div><div class="track"></div><div class="thumb"></div><div class="btn">${svg(6, 11, '<path d="M0 0v11l6-5.500z" fill="#f0f0f0"/>')}</div></div>`);

  el('xl-watermark', `:host{position:absolute;left:830px;top:836px;width:252px;pointer-events:none;display:flex;flex-direction:column;align-items:center;z-index:5}
    .ar{font:700 74px/84px "DejaVu Sans",sans-serif;color:#969696;opacity:.3;-webkit-text-stroke:4px #969696;direction:rtl;white-space:nowrap}
    .la{font:600 33px/32px "Open Sans",sans-serif;color:#c0c0c0;white-space:nowrap}`,
    '<div class="ar">نفذلي</div><div class="la">nafezly.com</div>');
</script>
</body>
</html>
